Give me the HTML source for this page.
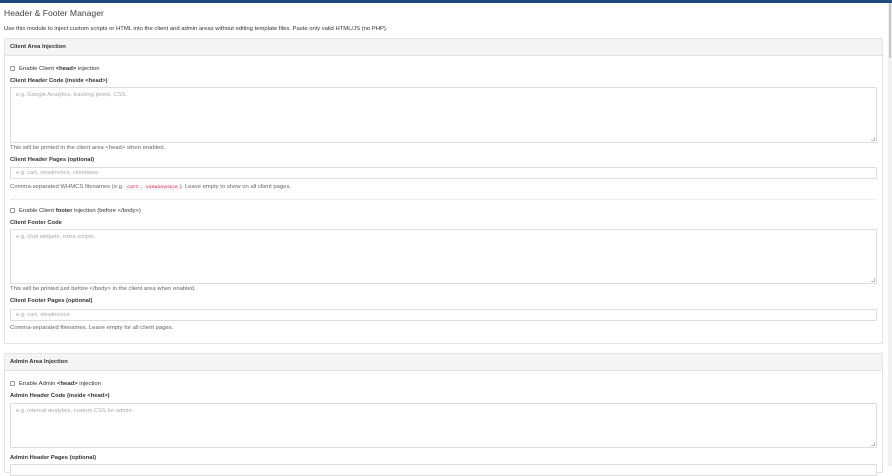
<!DOCTYPE html>
<html><head><meta charset="utf-8"><style>
*{box-sizing:border-box;margin:0;padding:0}
body{width:892px;height:466px;overflow:hidden;background:#fff;font-family:"Liberation Sans",sans-serif;color:#333;position:relative}
.a{position:absolute;white-space:nowrap}
.t{font-size:5.9px;line-height:7px}
.b{font-weight:bold;font-size:5.8px;line-height:7px}
.box{position:absolute;border:1px solid #ddd;background:#fff}
.ph{position:absolute;left:5px;top:4px;font-size:5.8px;color:#aaa;white-space:nowrap}
.cb{display:inline-block;width:5px;height:5px;border:1px solid #999;border-radius:1px;vertical-align:-1px;margin-right:4px}
.panel{position:absolute;left:4px;width:879px;border:1px solid #e3e3e3;border-radius:2px}
.ph2{position:absolute;left:0;top:0;right:0;height:17px;background:#f5f5f5;border-bottom:1px solid #e3e3e3}
code{font-family:"Liberation Mono",monospace;color:#c7254e;background:#f9f2f4;font-size:4.8px;padding:0 2px}
.rz{position:absolute;right:1px;bottom:1px;width:4px;height:4px;border-right:1px solid #bbb;border-bottom:1px solid #bbb}
</style></head><body>
<div class="a" style="left:0;top:0;width:892px;height:3px;background:#1d4a7a"></div>
<div class="a" style="left:888px;top:3px;width:4px;height:463px;background:#f1f1f1"></div>
<div class="a" style="left:889px;top:3px;width:2px;height:55px;background:#c8c8c8"></div>
<div class="a" style="left:4px;top:8px;font-size:8.6px;color:#444">Header &amp; Footer Manager</div>
<div class="a t" style="left:4px;top:26px">Use this module to inject custom scripts or HTML into the client and admin areas without editing template files. Paste only valid HTML/JS (no PHP).</div>

<div class="panel" style="top:38px;height:306px"><div class="ph2"></div></div>
<div class="a b" style="left:10px;top:44px">Client Area Injection</div>
<div class="a t" style="left:10px;top:66px"><span class="cb"></span>Enable Client <b>&lt;head&gt;</b> injection</div>
<div class="a b" style="left:10px;top:78px">Client Header Code (inside &lt;head&gt;)</div>
<div class="box" style="left:10px;top:87px;width:867px;height:56px"><div class="ph">e.g. Google Analytics, tracking pixels, CSS.</div><div class="rz"></div></div>
<div class="a t" style="left:10px;top:145px;color:#666">This will be printed in the client area &lt;head&gt; when enabled.</div>
<div class="a b" style="left:10px;top:157px">Client Header Pages (optional)</div>
<div class="box" style="left:10px;top:167px;width:867px;height:12px"><div class="ph" style="top:2px">e.g. cart, viewinvoice, clientarea</div></div>
<div class="a t" style="left:10px;top:184px;color:#666">Comma-separated WHMCS filenames (e.g. <code>cart</code>, <code>viewinvoice</code>). Leave empty to show on all client pages.</div>
<div class="a" style="left:10px;top:199px;width:867px;height:1px;background:#eee"></div>
<div class="a t" style="left:10px;top:208px"><span class="cb"></span>Enable Client <b>footer</b> injection (before &lt;/body&gt;)</div>
<div class="a b" style="left:10px;top:220px">Client Footer Code</div>
<div class="box" style="left:10px;top:229px;width:867px;height:55px"><div class="ph">e.g. chat widgets, extra scripts.</div><div class="rz"></div></div>
<div class="a t" style="left:10px;top:286px;color:#666">This will be printed just before &lt;/body&gt; in the client area when enabled.</div>
<div class="a b" style="left:10px;top:298px">Client Footer Pages (optional)</div>
<div class="box" style="left:10px;top:309px;width:867px;height:12px"><div class="ph" style="top:2px">e.g. cart, viewinvoice</div></div>
<div class="a t" style="left:10px;top:325px;color:#666">Comma-separated filenames. Leave empty for all client pages.</div>

<div class="panel" style="top:353px;height:120px"><div class="ph2"></div></div>
<div class="a b" style="left:10px;top:359px">Admin Area Injection</div>
<div class="a t" style="left:10px;top:381px"><span class="cb"></span>Enable Admin <b>&lt;head&gt;</b> injection</div>
<div class="a b" style="left:10px;top:393px">Admin Header Code (inside &lt;head&gt;)</div>
<div class="box" style="left:10px;top:403px;width:867px;height:45px"><div class="ph">e.g. internal analytics, custom CSS for admin.</div><div class="rz"></div></div>
<div class="a b" style="left:10px;top:455px">Admin Header Pages (optional)</div>
<div class="box" style="left:10px;top:464px;width:867px;height:12px"></div>
</body></html>
